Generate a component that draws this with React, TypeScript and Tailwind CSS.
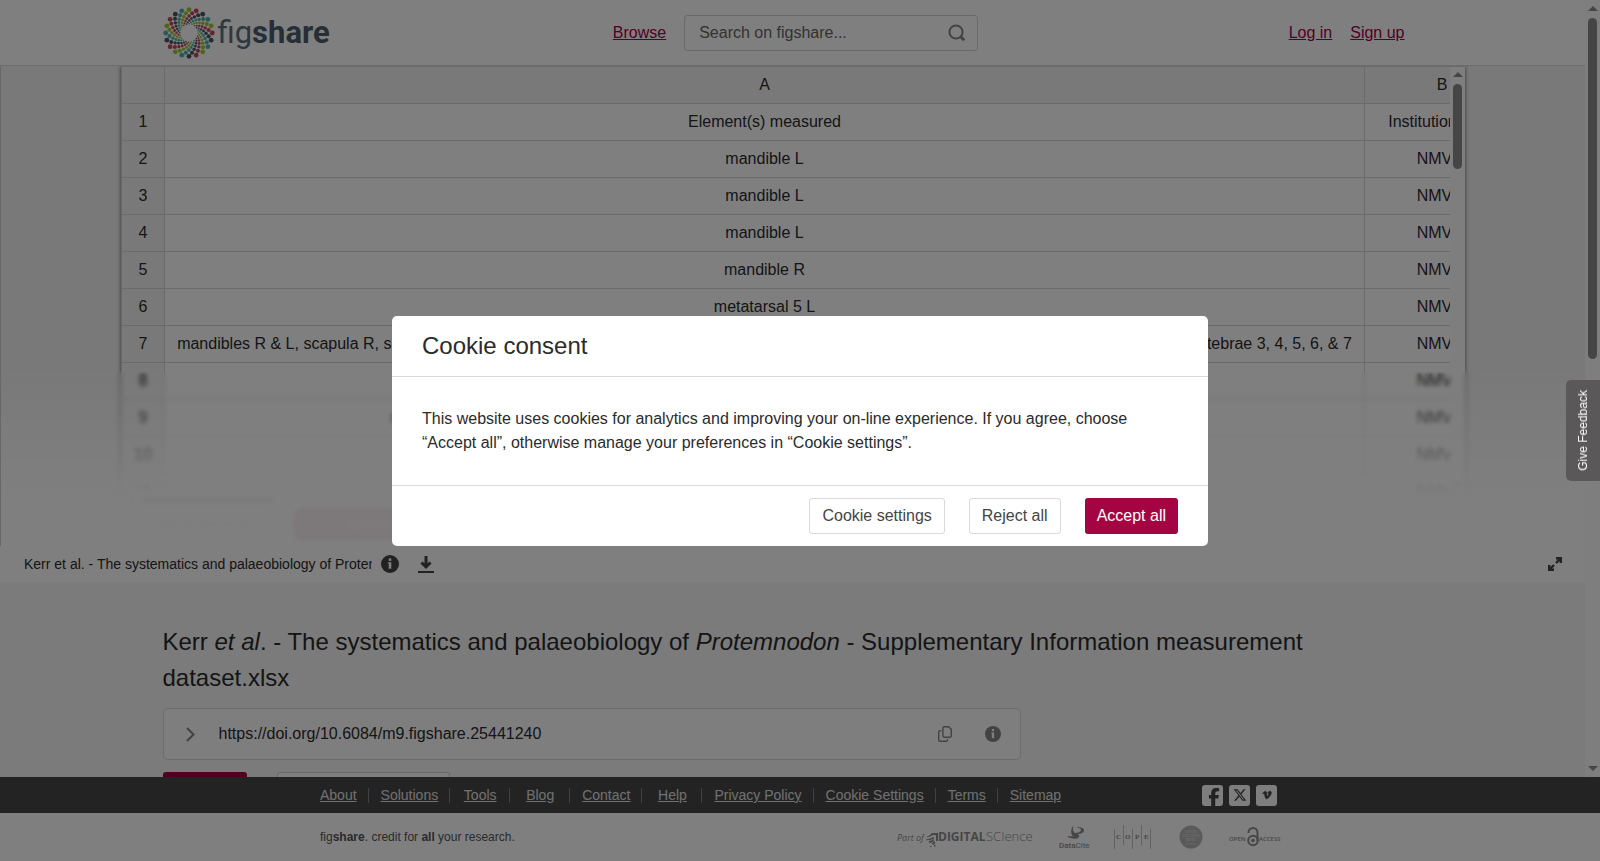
import React from 'react';
import { FaFacebookF, FaVimeoV, FaXTwitter } from 'react-icons/fa6';

const DOT_COLORS = ['#a0c72c', '#c7445a', '#4b5768', '#4fb5ab'];
const RINGS = [
  { r: 23.3, size: 2.4 },
  { r: 19.9, size: 2 },
  { r: 17, size: 1.7 },
  { r: 14.6, size: 1.4 },
  { r: 12.5, size: 1.2 },
  { r: 10.7, size: 1 },
  { r: 9.2, size: 0.8 },
];

const SHEET_ROWS = [
  ['Element(s) measured', 'Institution code'],
  ['mandible L', 'NMV P'],
  ['mandible L', 'NMV P'],
  ['mandible L', 'NMV P'],
  ['mandible R', 'NMV P'],
  ['metatarsal 5 L', 'NMV P'],
  [
    'mandibles R & L, scapula R, scapula L, humerus R & L, ulna R & L, radius R, pelvis, femur R & L, tibia R & L, fibula R, metatarsals R, cervical vertebrae 3, 4, 5, 6, & 7',
    'NMV P',
  ],
  ['mandible R', 'NMV P'],
  ['mandibles R & L, humerus R & L, ulna R & L, radius R & L, femur R & L, tibia R, fibula L, calcaneus R & L', 'NMV P'],
  ['mandible L', 'NMV P'],
  ['mandible L', 'NMV P'],
];

const FOOTER_LINKS = [
  'About', 'Solutions', 'Tools', 'Blog', 'Contact', 'Help',
  'Privacy Policy', 'Cookie Settings', 'Terms', 'Sitemap',
];

const Pinwheel = () => (
  <svg className="w-[52px] h-[52px]" viewBox="-26 -26 52 52" aria-hidden="true">
    {Array.from({ length: 20 }).map((_, arm) =>
      RINGS.map(({ r, size }, i) => {
        const a = ((arm * 18 - i * 8.7) * Math.PI) / 180;
        return (
          <circle key={`${arm}-${i}`} cx={r * Math.sin(a)} cy={-r * Math.cos(a)} r={size} fill={DOT_COLORS[arm % 4]} />
        );
      })
    )}
  </svg>
);

const InfoIcon = ({ className }: { className: string }) => (
  <svg className={className} viewBox="0 0 18 18" aria-hidden="true">
    <circle cx="9" cy="9" r="9" fill="currentColor" />
    <rect x="7.7" y="3.4" width="2.6" height="2.5" fill="#fff" />
    <path d="M7 7.2h3.3v6.6H7.7V8.4H7z" fill="#fff" />
  </svg>
);

const Header = () => (
  <header className="h-[66px] shrink-0 bg-white border-b border-[#d9d9d9]">
    <div className="max-w-[1260px] h-full mx-auto grid grid-cols-[1fr_auto_1fr] items-center">
      <a href="#home" className="flex items-center gap-[3px] text-[#5f717c]">
        <Pinwheel />
        <span className="font-[Roboto,sans-serif] text-[31px] leading-[36px]">
          fig<b className="font-bold text-[#4c5f6b]">share</b>
        </span>
      </a>
      <div className="flex items-center gap-[18px] pl-[6px]">
        <a href="#browse" className="text-[#a50044] underline">Browse</a>
        <form className="relative" role="search">
          <input
            type="text"
            aria-label="Search on figshare"
            placeholder="Search on figshare..."
            className="w-[294px] h-9 pl-[14px] pr-10 bg-white border border-[#d4d4d4] rounded-[3px] placeholder:text-[#666]"
          />
          <button type="button" aria-label="Search" className="absolute right-3 top-[9px] text-[#858585]">
            <svg className="w-[18px] h-[18px]" viewBox="0 0 18 18" fill="none" stroke="currentColor" strokeWidth="2">
              <circle cx="8" cy="8" r="6.6" />
              <path d="M12.4 12.4l3.8 3.8" strokeWidth="3" />
            </svg>
          </button>
        </form>
      </div>
      <nav className="flex justify-end gap-[18px] pr-[18px]">
        <a href="#login" className="text-[#a50044] underline">Log in</a>
        <a href="#signup" className="text-[#a50044] underline">Sign up</a>
      </nav>
    </div>
  </header>
);

const Spreadsheet = () => (
  <div className="h-[442px] mx-[120px] flex bg-white border-t border-l border-[#d4d4d4] shadow-[0_0_4px_rgba(0,0,0,0.6)]">
    <div className="flex-1 min-w-0 flex flex-col">
      <div className="flex-1 min-h-0 overflow-hidden">
        <table className="w-[1398px] table-fixed border-separate border-spacing-0 text-center text-[#2b2b2b]">
          <colgroup>
            <col className="w-[43px]" />
            <col className="w-[1200px]" />
            <col className="w-[155px]" />
          </colgroup>
          <thead>
            <tr className="h-[37px] bg-[#f3f3f3]">
              <th className="border-r border-b border-[#d6d6d6]" aria-label="Row" />
              <th className="font-normal border-r border-b border-[#d6d6d6]">A</th>
              <th className="font-normal border-r border-b border-[#d6d6d6]">B</th>
            </tr>
          </thead>
          <tbody>
            {SHEET_ROWS.map(([element, institution], i) => (
              <tr key={i} className="h-[37px] whitespace-nowrap">
                <th className="font-normal bg-[#f3f3f3] border-r border-b border-[#d6d6d6]">{i + 1}</th>
                <td className="overflow-hidden border-r border-b border-[#d6d6d6]">{element}</td>
                <td className="border-r border-b border-[#d6d6d6]">{institution}</td>
              </tr>
            ))}
          </tbody>
        </table>
      </div>
      <div className="h-[15px] flex items-center gap-[6px] px-[6px]">
        <span className="border-y-[5px] border-y-transparent border-r-[5px] border-r-[#8b8b8b]" />
        <span className="w-[135px] h-[9px] rounded-full bg-[#8b8b8b]" />
      </div>
    </div>
    <div className="w-[15px] flex flex-col items-center pt-[5px] pb-[20px] bg-[#fcfcfc]">
      <span className="border-x-[5px] border-x-transparent border-b-[5px] border-b-[#8b8b8b]" />
      <span className="w-[9px] h-[85px] mt-[7px] rounded-full bg-[#8b8b8b]" />
      <span className="mt-auto border-x-[5px] border-x-transparent border-t-[5px] border-t-[#8b8b8b]" />
    </div>
  </div>
);

const FileViewer = () => (
  <section aria-label="File preview">
    <div className="relative h-[480px] overflow-hidden border-l border-[#d0d0d0] bg-[#f3f3f3]">
      <Spreadsheet />
      <div className="flex mx-[120px] bg-white">
        <button className="w-[172px] h-[32px] text-sm text-[#999]">Measurements</button>
        <button className="w-[172px] h-[32px] text-sm text-[#d99bb3] bg-[#a50044] rounded-l-lg">Specimens</button>
      </div>
      {/* fade over the lower rows */}
      <div className="absolute inset-x-0 bottom-0 h-[174px] backdrop-blur-[2px] bg-linear-to-b from-white/0 via-white/95 via-70% to-white/95" />
    </div>
    <div className="h-9 flex items-center bg-white pl-6 pr-[23px] text-[#2b2b2b]">
      <span className="w-[348px] overflow-hidden whitespace-nowrap text-sm">
        Kerr et al. - The systematics and palaeobiology of Protemnodon
      </span>
      <button aria-label="File info" className="ml-[9px] text-[#454545]">
        <InfoIcon className="w-[18px] h-[18px]" />
      </button>
      <button aria-label="Download" className="ml-[19px] text-[#454545]">
        <svg className="w-4 h-[18px]" viewBox="0 0 16 18" fill="none" stroke="currentColor">
          <path d="M8 1v11M3.5 7.500L8 12l4.500-4.500" strokeWidth="3" />
          <path d="M0 17h16" strokeWidth="2" />
        </svg>
      </button>
      <button aria-label="Full screen" className="ml-auto text-[#454545]">
        <svg className="w-[14px] h-[14px]" viewBox="0 0 14 14" fill="none" stroke="currentColor" strokeWidth="2.4">
          <path d="M8 1.200h4.800V6M12.500 1.500L8 6M6 12.800H1.200V8M1.500 12.500L6 8" />
        </svg>
      </button>
    </div>
  </section>
);

const ItemDetails = () => (
  <section className="max-w-[1260px] mx-auto pt-[42px] text-[#2b2b2b]">
    <h1 className="max-w-[1200px] text-2xl leading-9">
      Kerr <i>et al</i>. - The systematics and palaeobiology of <i>Protemnodon</i> - Supplementary Information
      measurement dataset.xlsx
    </h1>
    <div className="w-[858px] h-[52px] mt-3 flex items-center pl-[22px] pr-[19px] bg-[#fdfdfd] border border-[#d6d6d6] rounded-[5px]">
      <button aria-label="Show citation" className="text-[#858585]">
        <svg className="w-[9px] h-[15px]" viewBox="0 0 9 15" fill="none" stroke="currentColor" strokeWidth="2">
          <path d="M1 1l6.5 6.5L1 14" />
        </svg>
      </button>
      <span className="ml-6">https://doi.org/10.6084/m9.figshare.25441240</span>
      <button aria-label="Copy DOI" className="ml-auto text-[#858585]">
        <svg className="w-[14px] h-4" viewBox="0 0 14 16" fill="none" stroke="currentColor" strokeWidth="1.4">
          <path d="M6.4.7h4.2l2.7 2.7v6.4a1.5 1.5 0 0 1-1.5 1.5H6.4a1.5 1.5 0 0 1-1.5-1.5V2.2A1.5 1.5 0 0 1 6.4.7z" />
          <path d="M3.2 4.6H2.2A1.5 1.5 0 0 0 .7 6.1v7.7a1.5 1.5 0 0 0 1.5 1.5h5.9a1.5 1.5 0 0 0 1.5-1.5v-.6" />
        </svg>
      </button>
      <button aria-label="DOI info" className="ml-[33px] text-[#858585]">
        <InfoIcon className="w-4 h-4" />
      </button>
    </div>
    <div className="flex gap-[30px] mt-3">
      <button aria-label="Cite" className="w-[84px] h-9 bg-[#a50044] rounded-[3px]" />
      <button aria-label="Download all" className="w-[173px] h-9 bg-white border border-[#ccc] rounded-[3px]" />
    </div>
  </section>
);

const PartnerLogos = () => (
  <div className="flex items-center text-[#8c8c8c]">
    <svg className="w-[138px] h-6 overflow-visible" viewBox="0 0 138 24" fill="currentColor" fontFamily="'Open Sans', sans-serif">
      <text x="1" y="16" fontSize="9" fontStyle="italic">Part of</text>
      <path d="M36 8h6v8h-2v-6h-3l-4 2 1-2zM33 14l5-2v1.500l-5 2zM32 17l6-3v1.500l-3 2.500zM36 18l3-2v3l-2 1zM34 21h1.500v1H34zM38 20h1.500v1.500H38z" />
      <path d="M31 12l5-2M30 15l4-1" stroke="currentColor" strokeWidth="1" />
      <text x="42" y="16" fontSize="12" fontWeight="700">DIGITAL</text>
      <text x="90" y="16" fontSize="13" fontWeight="300">SCIence</text>
    </svg>
    <svg className="w-8 h-6 ml-[25px] overflow-visible" viewBox="0 0 32 24" fill="currentColor">
      <path d="M15 0c-3 3-4 8-1 11.500l-6-.5c3 3 10 4 12 1 1-2-1-3-2-3 4 0 7-1.500 7-3.500 0-3.500-6-4-9-2.500 3-.5 6 .5 6 2s-2 3-6 3C13.500 6 13.500 3 15 0z" />
      <text x="0" y="23" fontSize="8" fontFamily="Roboto, sans-serif">
        <tspan fontWeight="500">Data</tspan>Cite
      </text>
    </svg>
    <svg className="w-[38px] h-6 ml-[23px]" viewBox="0 0 38 24" fill="currentColor" fontFamily="'Liberation Serif', serif" fontSize="7" fontWeight="700">
      <path d="M.5 4v20M9.500 0v20M18.500 4v20M27.500 0v20M36.500 4v20" stroke="#c4c4c4" strokeWidth="1" />
      <text x="2" y="14">C</text>
      <text x="11" y="14">O</text>
      <text x="21" y="14">P</text>
      <text x="30" y="14">E</text>
    </svg>
    <svg className="w-6 h-6 ml-[27px]" viewBox="0 0 24 24" fontFamily="'Open Sans', sans-serif" fontWeight="700" textAnchor="middle">
      <circle cx="12" cy="12" r="11.5" fill="#b4b4b4" />
      <g fill="#d4d4d4" fontSize="4">
        <text x="12" y="8">OPEN</text>
        <text x="12" y="12">CULTURE</text>
        <text x="12" y="16">BEST</text>
      </g>
      <path d="M7 19h10" stroke="#d4d4d4" strokeWidth="0.8" />
    </svg>
    <svg className="w-[50px] h-6 ml-[27px] overflow-visible" viewBox="0 0 50 24" fill="currentColor" fontFamily="'Open Sans', sans-serif" fontSize="6" fontWeight="600">
      <text x="-1" y="16">OPEN</text>
      <g fill="none" stroke="currentColor" strokeWidth="2">
        <circle cx="23" cy="15.5" r="4.8" />
        <path d="M18.500 8V7.500a4.500 4.500 0 0 1 9 0V16" />
      </g>
      <circle cx="23" cy="15.5" r="1.8" />
      <text x="29" y="16">ACCESS</text>
    </svg>
  </div>
);

const Footer = () => (
  <footer className="shrink-0 bg-white">
    <div className="h-9 bg-[#464646]">
      <div className="max-w-[960px] h-full mx-auto flex items-center">
        <nav className="flex items-center text-sm text-[#e0e0e0]">
          {FOOTER_LINKS.map((label) => (
            <span
              key={label}
              className="min-w-[60px] h-[15px] pl-3 pr-[11px] flex items-center justify-center border-r border-[#808080] whitespace-nowrap first:pl-0 first:min-w-0 last:border-r-0"
            >
              <a href="#footer" className="underline">{label}</a>
            </span>
          ))}
        </nav>
        <div className="ml-auto mr-[3px] flex gap-[6px] text-[#464646]">
          <a href="#facebook" aria-label="Facebook" className="w-[21px] h-[21px] flex items-end justify-end pr-[3px] overflow-hidden bg-[#fcfcfc] rounded-[3px]">
            <FaFacebookF className="w-3 h-[18px]" />
          </a>
          <a href="#x" aria-label="X" className="w-[21px] h-[21px] flex items-center justify-center bg-[#fcfcfc] rounded-[3px]">
            <FaXTwitter className="w-[14px] h-[14px]" />
          </a>
          <a href="#vimeo" aria-label="Vimeo" className="w-[21px] h-[21px] flex items-center justify-center bg-[#fcfcfc] rounded-[3px]">
            <FaVimeoV className="w-[10px] h-[10px]" stroke="currentColor" strokeWidth="30" />
          </a>
        </div>
      </div>
    </div>
    <div className="max-w-[960px] h-12 mx-auto flex items-center justify-between text-xs text-[#555]">
      <p>
        fig<b>share</b>. credit for <b>all</b> your research.
      </p>
      <PartnerLogos />
    </div>
  </footer>
);

const CookieDialog = () => (
  <div className="fixed inset-0 z-20 flex items-center justify-center bg-black/50">
    <div role="dialog" aria-modal="true" aria-labelledby="cookie-title" className="w-full max-w-[816px] bg-white rounded-[5px] text-[#2b2b2b]">
      <h2 id="cookie-title" className="h-[61px] flex items-center px-[30px] text-2xl border-b border-[#d9d9d9]">
        Cookie consent
      </h2>
      <p className="px-[30px] py-[30px] leading-6">
        This website uses cookies for analytics and improving your on-line experience. If you agree, choose “Accept
        all”, otherwise manage your preferences in “Cookie settings”.
      </p>
      <div className="flex justify-end gap-6 px-[30px] py-3 border-t border-[#d9d9d9]">
        <button className="h-9 px-3 border border-[#d9d9d9] rounded-[3px] text-[#454545]">Cookie settings</button>
        <button className="h-9 px-3 border border-[#d9d9d9] rounded-[3px] text-[#454545]">Reject all</button>
        <button className="h-9 px-3 bg-[#a50443] rounded-[3px] text-white">Accept all</button>
      </div>
    </div>
  </div>
);

export default function App() {
  return (
    <div className="h-screen flex flex-col overflow-hidden bg-[#f6f6f6] font-['Liberation_Sans',Arial,sans-serif] text-base">
      <div className="flex-1 min-h-0 flex">
        <div className="flex-1 min-w-0 flex flex-col overflow-hidden">
          <Header />
          <main className="flex-1 min-h-0 overflow-hidden">
            <FileViewer />
            <ItemDetails />
          </main>
        </div>
        <div className="w-[15px] flex flex-col items-center py-[6px] bg-[#fcfcfc]">
          <span className="border-x-[5px] border-x-transparent border-b-[5px] border-b-[#8b8b8b]" />
          <span className="w-[9px] h-[341px] mt-[7px] rounded-full bg-[#8b8b8b]" />
          <span className="mt-auto border-x-[5px] border-x-transparent border-t-[5px] border-t-[#8b8b8b]" />
        </div>
      </div>
      <Footer />
      <CookieDialog />
      <button className="fixed right-0 top-[380px] z-30 w-[34px] h-[101px] flex items-center justify-center rounded-l-[5px] bg-[#5b5859] text-xs text-white">
        <span className="rotate-180 [writing-mode:vertical-rl]">Give Feedback</span>
      </button>
    </div>
  );
}
